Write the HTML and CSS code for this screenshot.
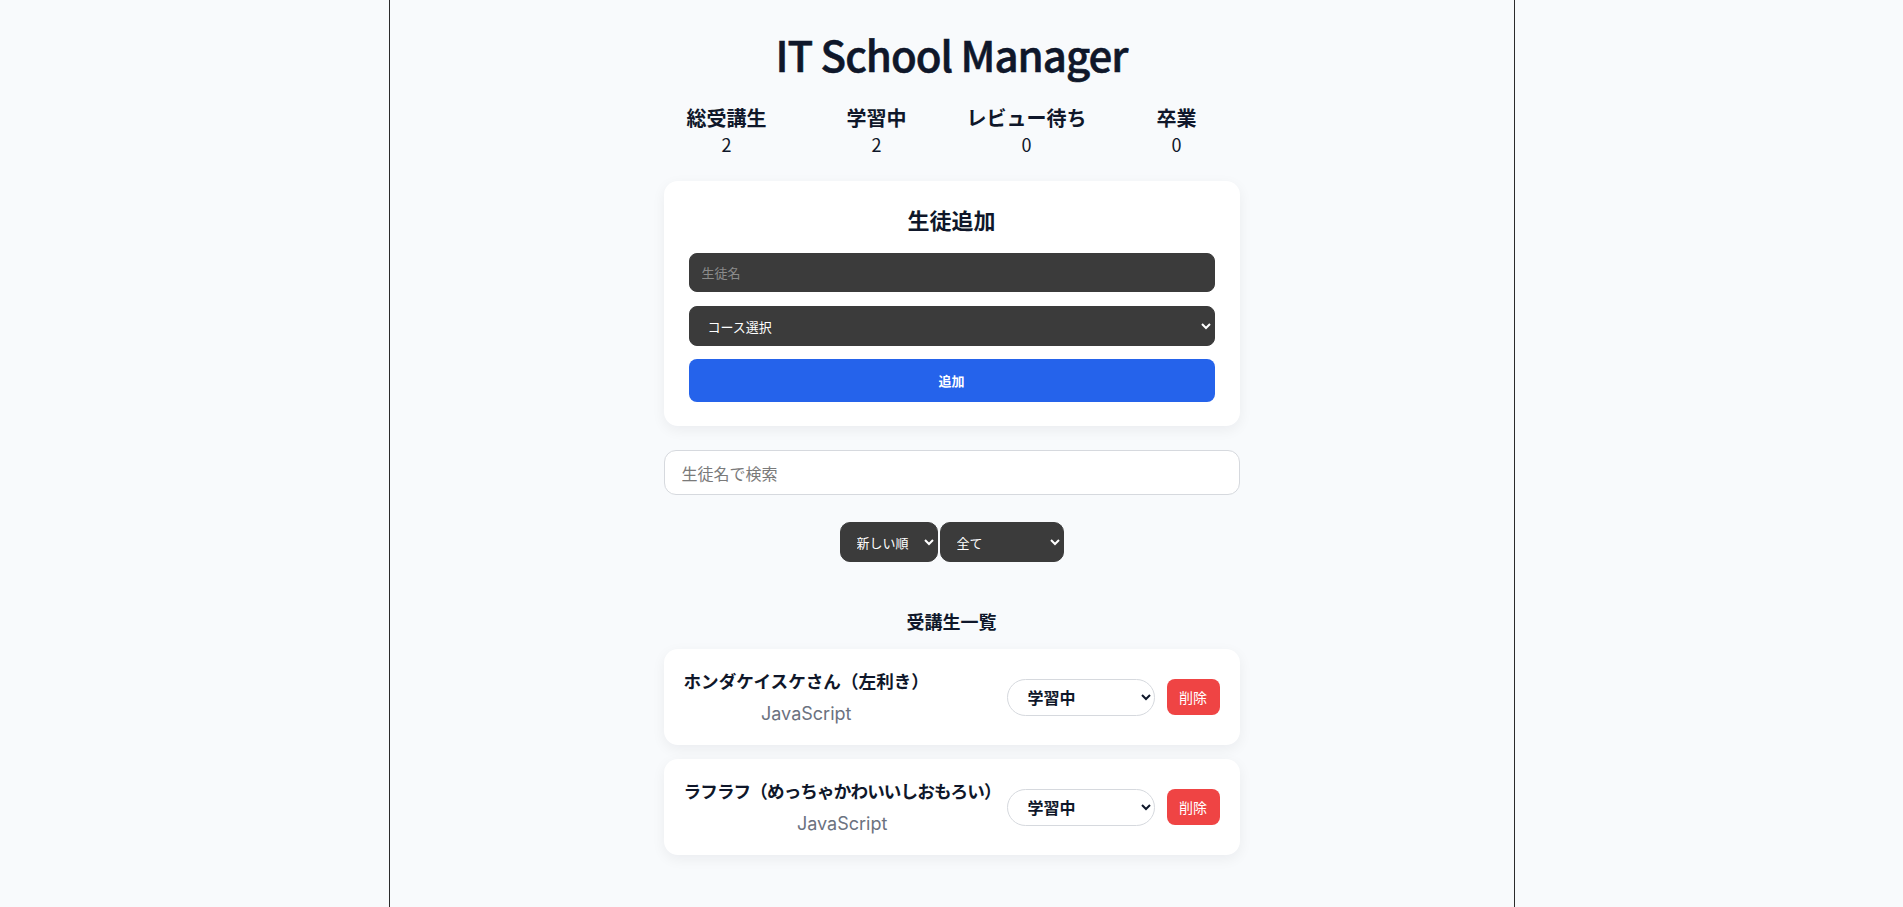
FILE: index.html
```html
<!DOCTYPE html>
<html lang="ja">
<head>
<meta charset="utf-8">
<title>IT School Manager</title>
<link rel="stylesheet" href="styles.css">
</head>
<body>
<div class="app">
  <h1 class="title">IT School Manager</h1>

  <div class="stats">
    <div class="stat"><div class="stat-label">総受講生</div><div class="stat-value">2</div></div>
    <div class="stat"><div class="stat-label">学習中</div><div class="stat-value">2</div></div>
    <div class="stat"><div class="stat-label">レビュー待ち</div><div class="stat-value">0</div></div>
    <div class="stat"><div class="stat-label">卒業</div><div class="stat-value">0</div></div>
  </div>

  <div class="main">
    <section class="form-card">
      <h2 class="form-title">生徒追加</h2>
      <input class="dark-input" type="text" placeholder="生徒名">
      <select class="dark-select">
        <option>コース選択</option>
        <option>JavaScript</option>
        <option>Python</option>
        <option>Ruby</option>
      </select>
      <button class="add-btn" type="button">追加</button>
    </section>

    <input class="search" type="text" placeholder="生徒名で検索">

    <div class="filters">
      <select class="filter filter-sort">
        <option>新しい順</option>
        <option>古い順</option>
      </select>
      <select class="filter filter-status">
        <option>全て</option>
        <option>学習中</option>
        <option>レビュー待ち</option>
        <option>卒業</option>
      </select>
    </div>

    <h3 class="list-title">受講生一覧</h3>

    <ul class="list">
      <li class="student-card">
        <div class="info">
          <div class="name">ホンダケイスケさん（左利き）</div>
          <div class="course">JavaScript</div>
        </div>
        <div class="actions">
          <select class="status-select">
            <option>学習中</option>
            <option>レビュー待ち</option>
            <option>卒業</option>
          </select>
          <button class="del-btn" type="button">削除</button>
        </div>
      </li>
      <li class="student-card">
        <div class="info">
          <div class="name name-long">ラフラフ（めっちゃかわいいしおもろい）</div>
          <div class="course">JavaScript</div>
        </div>
        <div class="actions">
          <select class="status-select">
            <option>学習中</option>
            <option>レビュー待ち</option>
            <option>卒業</option>
          </select>
          <button class="del-btn" type="button">削除</button>
        </div>
      </li>
    </ul>
  </div>
</div>
</body>
</html>
```

FILE: styles.css
```css
* {
  box-sizing: border-box;
}

html, body {
  margin: 0;
  padding: 0;
  background: #f8fafc;
}

body {
  font-family: "Noto Sans CJK JP", "Noto Sans", sans-serif;
  color: #0f172a;
}

.app {
  width: 1126px;
  min-height: 907px;
  margin: 0 auto;
  border-left: 1px solid #2b2b2b;
  border-right: 1px solid #2b2b2b;
  padding-top: 25px;
  display: flex;
  flex-direction: column;
  align-items: center;
}

.title {
  margin: 0;
  font-size: 42px;
  line-height: 58px;
  font-weight: 500;
  color: #0f172a;
  letter-spacing: -1px;
  -webkit-text-stroke: 0.6px #0f172a;
}

.stats {
  margin-top: 21px;
  display: grid;
  grid-template-columns: repeat(4, 150px);
}

.stat {
  text-align: center;
}

.stat-label {
  font-size: 20px;
  line-height: 27px;
  font-weight: 700;
}

.stat-value {
  font-size: 18px;
  line-height: 27px;
  font-weight: 400;
}

.main {
  width: 576px;
  display: flex;
  flex-direction: column;
  margin-top: 23px;
}

.form-card {
  background: #ffffff;
  border-radius: 14px;
  box-shadow: 0 4px 14px rgba(15, 23, 42, 0.06);
  padding: 24px 25px 24px 25px;
  display: flex;
  flex-direction: column;
}

.form-title {
  margin: 0 0 19px;
  font-size: 22px;
  line-height: 29px;
  font-weight: 700;
  text-align: center;
}

.dark-input,
.dark-select {
  width: 100%;
  background: #3b3b3b;
  color: #ffffff;
  border: 1px solid #3b3b3b;
  border-radius: 8px;
  font-family: "Noto Sans CJK JP", sans-serif;
  font-size: 13px;
}

.dark-input {
  height: 39px;
  padding: 0 12px;
  margin-bottom: 14px;
  outline: none;
}

.dark-input::placeholder {
  color: #8b8b8b;
}

.dark-select {
  height: 40px;
  padding: 0 14px;
  margin-bottom: 13px;
}

.add-btn {
  height: 43px;
  width: 100%;
  border: none;
  border-radius: 8px;
  background: #2563eb;
  color: #ffffff;
  font-family: "Noto Sans CJK JP", sans-serif;
  font-size: 13px;
  font-weight: 700;
}

.search {
  margin-top: 24px;
  height: 45px;
  width: 100%;
  border: 1px solid #d6d9de;
  border-radius: 12px;
  background: #ffffff;
  padding: 0 17px;
  font-family: "Noto Sans CJK JP", sans-serif;
  font-size: 16px;
  color: #0f172a;
  outline: none;
}

.search::placeholder {
  color: #7a7a7a;
}

.filters {
  margin-top: 27px;
  display: flex;
  justify-content: center;
  gap: 2px;
}

.filter {
  height: 40px;
  background: #3b3b3b;
  color: #ffffff;
  border: 1px solid #3b3b3b;
  border-radius: 10px;
  padding: 0 8px 0 12px;
  font-family: "Noto Sans CJK JP", sans-serif;
  font-size: 13px;
}

.filter-sort {
  width: 98px;
}

.filter-status {
  width: 124px;
}

.list-title {
  margin: 46px 0 14px;
  text-align: center;
  font-size: 18px;
  line-height: 27px;
  font-weight: 700;
}

.list {
  list-style: none;
  margin: 0;
  padding: 0;
  display: flex;
  flex-direction: column;
  gap: 14px;
}

.student-card {
  background: #ffffff;
  border-radius: 14px;
  box-shadow: 0 4px 14px rgba(15, 23, 42, 0.06);
  padding: 18px 20px;
  display: flex;
  align-items: center;
  justify-content: space-between;
}

.info {
  text-align: center;
  flex-shrink: 0;
}

.name {
  font-size: 17.6px;
  line-height: 27px;
  font-weight: 700;
  color: #0f172a;
  margin-bottom: 6px;
  white-space: nowrap;
}

.name-long {
  letter-spacing: -0.9px;
}

.course {
  font-family: "Inter", sans-serif;
  font-size: 18px;
  line-height: 27px;
  color: #6b7280;
}

.actions {
  display: flex;
  align-items: center;
  gap: 12px;
  flex-shrink: 0;
}

.status-select {
  width: 148px;
  height: 37px;
  border: 1px solid #d6d9de;
  border-radius: 19px;
  background: #ffffff;
  color: #0f172a;
  padding: 0 8px 0 16px;
  font-family: "Noto Sans CJK JP", sans-serif;
  font-size: 16px;
  font-weight: 700;
}

.del-btn {
  width: 53px;
  height: 36px;
  border: none;
  border-radius: 8px;
  background: #ef4444;
  color: #ffffff;
  font-family: "Noto Sans CJK JP", sans-serif;
  font-size: 14px;
}
```
